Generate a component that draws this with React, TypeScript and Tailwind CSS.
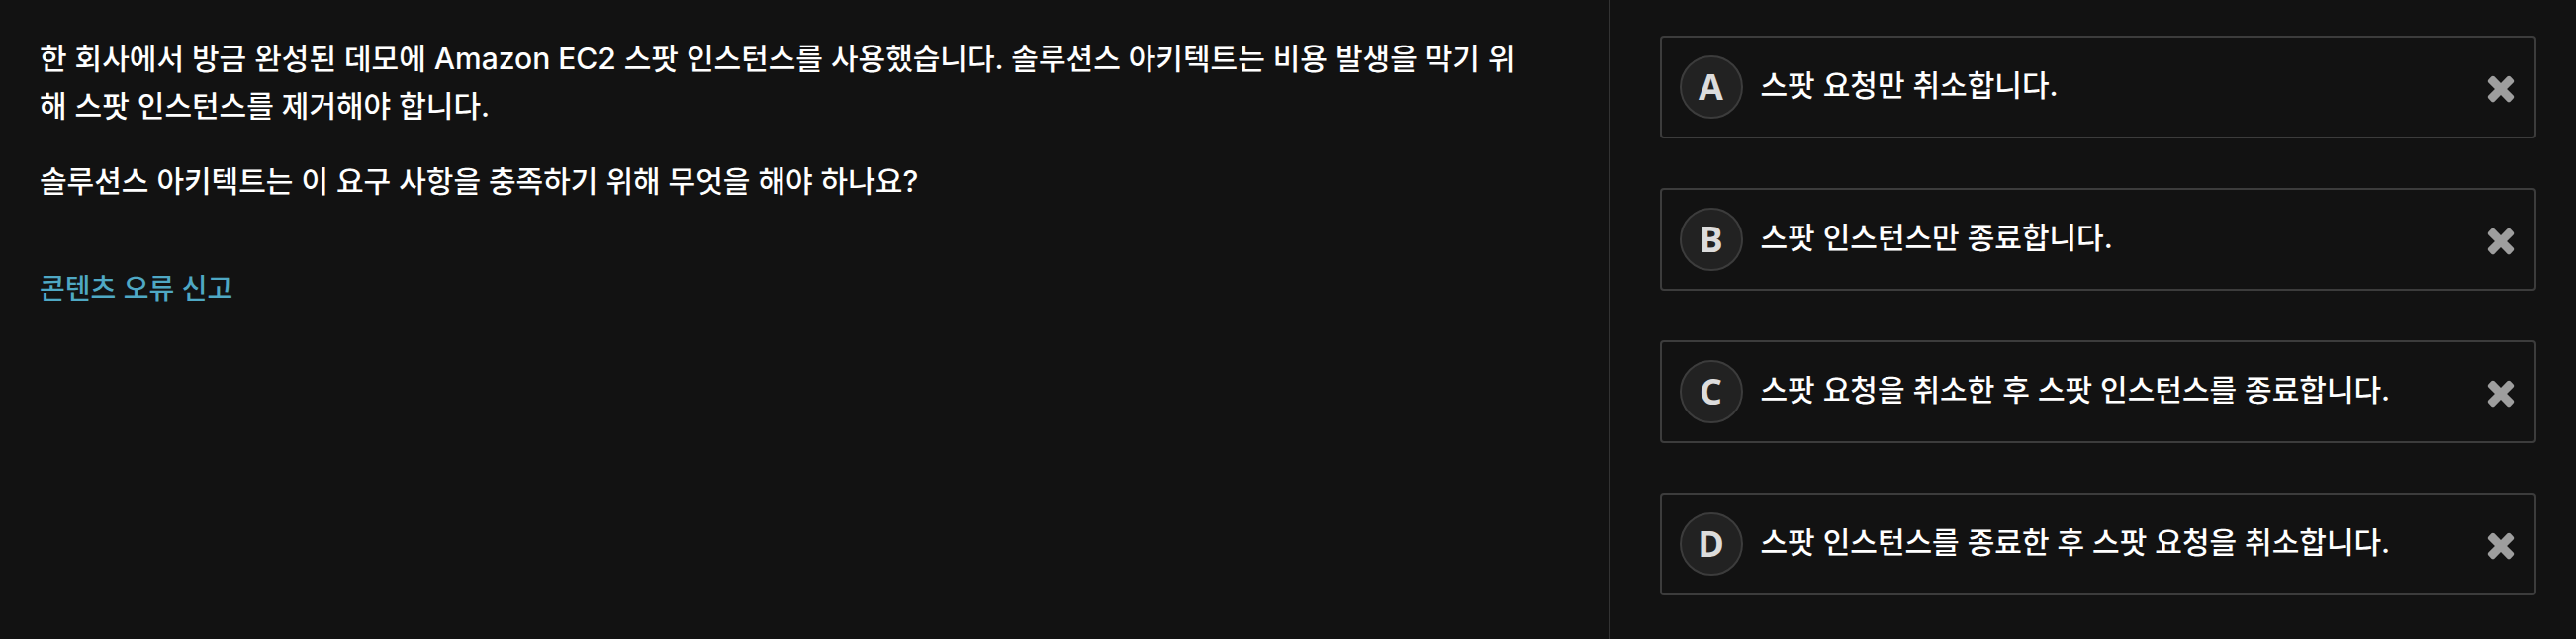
const options = [
  { letter: "A", text: "스팟 요청만 취소합니다." },
  { letter: "B", text: "스팟 인스턴스만 종료합니다." },
  { letter: "C", text: "스팟 요청을 취소한 후 스팟 인스턴스를 종료합니다." },
  { letter: "D", text: "스팟 인스턴스를 종료한 후 스팟 요청을 취소합니다." },
];

function CrossIcon() {
  return (
    <svg viewBox="0 64 1792 1792" className="size-10 fill-current" aria-hidden="true">
      <path d="M1490 1322q0 40-28 68l-136 136q-28 28-68 28t-68-28l-294-294-294 294q-28 28-68 28t-68-28l-136-136q-28-28-28-68t28-68l294-294-294-294q-28-28-28-68t28-68l136-136q28-28 68-28t68 28l294 294 294-294q28-28 68-28t68 28l136 136q28 28 28 68t-28 68l-294 294 294 294q28 28 28 68z" />
    </svg>
  );
}

function Option({ letter, text }: { letter: string; text: string }) {
  return (
    <li className="flex items-center rounded-sm border-2 border-[#3c3c3c] pr-3.5">
      <button type="button" className="flex grow items-center gap-[18px] py-[18px] pl-[18px] text-left">
        <span className="flex size-16 shrink-0 items-center justify-center rounded-full border-2 border-[#3c3c3c] bg-[#222222] font-['Open_Sans',sans-serif] text-4xl font-bold text-[#dcdcdc]">
          {letter}
        </span>
        <span className="pb-1 text-[30px] leading-[48px] font-medium">{text}</span>
      </button>
      <button type="button" aria-label={`${letter} 제외`} className="shrink-0 pt-1 text-[#9e9e9e]">
        <CrossIcon />
      </button>
    </li>
  );
}

export default function App() {
  return (
    <main className="flex min-h-screen bg-[#121212] font-['Inter','Noto_Sans_CJK_KR',sans-serif] text-white">
      <section className="w-[62.5%] shrink-0 border-r-2 border-[#333333] pt-[35px] pr-20 pb-9 pl-10">
        <div className="flex flex-col gap-7 text-[30px] leading-[48px] font-medium">
          <p>
            한 회사에서 방금 완성된 데모에 Amazon EC2 스팟 인스턴스를 사용했습니다. 솔루션스 아키텍트는
            비용 발생을 막기 위해 스팟 인스턴스를 제거해야 합니다.
          </p>
          <p>솔루션스 아키텍트는 이 요구 사항을 충족하기 위해 무엇을 해야 하나요?</p>
        </div>
        <a href="#report" className="mt-[61px] inline-block text-[28px] leading-[48px] font-medium text-[#4fa8c4]">
          콘텐츠 오류 신고
        </a>
      </section>
      <ul className="flex grow flex-col gap-[50px] py-9 pr-10 pl-[50px]">
        {options.map((option) => (
          <Option key={option.letter} {...option} />
        ))}
      </ul>
    </main>
  );
}
